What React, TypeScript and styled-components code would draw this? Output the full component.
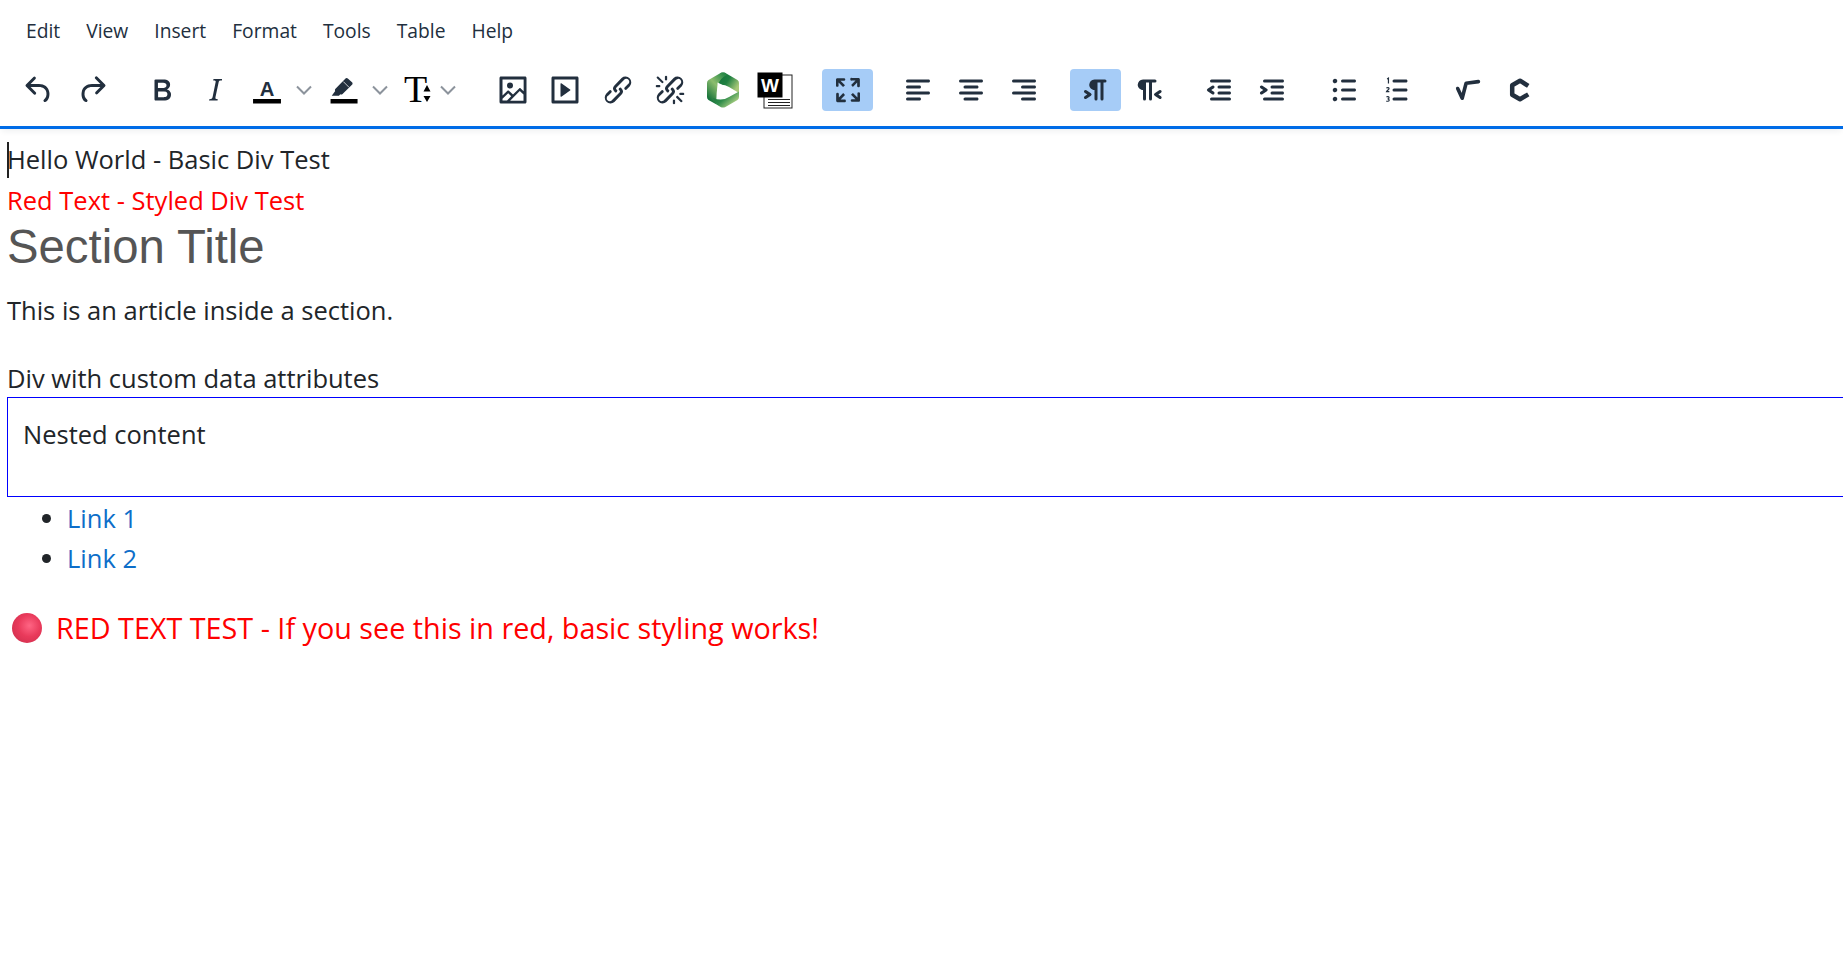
import styled, { createGlobalStyle } from "styled-components";

const GlobalStyle = createGlobalStyle`
  html, body {
    margin: 0;
    padding: 0;
    height: 100%;
    background: #fff;
    overflow: hidden;
  }
  #root { height: 100%; }
`;

const icons: Record<string, string> = {
  undo: "M6.4 8H12c3.7 0 6.2 2 6.8 5.1.6 2.7-.4 5.6-2.3 6.8a1 1 0 0 1-1-1.8c1.1-.6 1.8-2.7 1.4-4.6-.5-2.1-2.1-3.5-4.9-3.5H6.4l3.3 3.3a1 1 0 1 1-1.4 1.4l-5-5a1 1 0 0 1 0-1.4l5-5a1 1 0 0 1 1.4 1.4L6.4 8Z",
  redo: "M17.6 10H12c-2.8 0-4.4 1.4-4.9 3.5-.4 2 .3 4 1.4 4.6a1 1 0 1 1-1 1.8c-2-1.2-2.9-4.1-2.3-6.8.6-3 3-5.1 6.8-5.1h5.6l-3.3-3.3a1 1 0 1 1 1.4-1.4l5 5a1 1 0 0 1 0 1.4l-5 5a1 1 0 0 1-1.4-1.4l3.3-3.3Z",
  bold: "M7.8 19c-.3 0-.5 0-.6-.2l-.2-.5V5.7c0-.2 0-.4.2-.5l.6-.2h5c1.5 0 2.7.3 3.5 1 .7.6 1.1 1.4 1.1 2.5a3 3 0 0 1-.6 1.9c-.4.6-1 1-1.6 1.2.4.1.9.3 1.3.6s.8.7 1 1.2c.4.4.5 1 .5 1.6 0 1.3-.4 2.3-1.3 3-.8.7-2.1 1-3.8 1H7.8Zm5-8.3c.6 0 1.2-.1 1.6-.5.4-.3.6-.7.6-1.3 0-1.1-.8-1.7-2.3-1.7H9.3v3.5h3.4Zm.5 6c.7 0 1.3-.1 1.7-.4.4-.4.6-.9.6-1.5s-.2-1-.7-1.4c-.4-.3-1-.4-2-.4H9.4v3.8h4Z",
  italic: "M16.7 4.7l-.1.9h-.3c-.6 0-1 0-1.4.3-.3.3-.4.6-.5 1.1l-2.1 9.8v.6c0 .5.4.8 1.4.8h.2l-.2.8H8l.2-.8h.2c1.1 0 1.8-.5 2-1.5l2-9.8.1-.5c0-.6-.4-.8-1.4-.8h-.3l.2-.9h5.8Z",
  image: "M5 15.7l3.3-3.2c.3-.3.7-.3 1 0L12 15l4.1-4c.3-.4.8-.4 1 0l2 1.9V5H5v10.7ZM5 18V19h3l2.8-2.9-2-2L5 17.9Zm14-3l-2.5-2.4-6.4 6.5H19v-4ZM4 3h16c.6 0 1 .4 1 1v16c0 .6-.4 1-1 1H4a1 1 0 0 1-1-1V4c0-.6.4-1 1-1Zm6 8a2 2 0 1 0 0-4 2 2 0 0 0 0 4Z",
  media: "M4 3h16c.6 0 1 .4 1 1v16c0 .6-.4 1-1 1H4a1 1 0 0 1-1-1V4c0-.6.4-1 1-1Zm1 2v14h14V5H5Zm4.8 2.6l5.6 4a.5.5 0 0 1 0 .8l-5.6 4A.5.5 0 0 1 9 16V8a.5.5 0 0 1 .8-.4Z",
  link: "M6.2 12.3a1 1 0 0 1 1.4 1.4l-2 2a2 2 0 1 0 2.6 2.8l4.8-4.8a1 1 0 0 0 0-1.4 1 1 0 1 1 1.4-1.3 2.9 2.9 0 0 1 0 4L9.6 20a3.9 3.9 0 0 1-5.5-5.5l2-2Zm11.6-.6a1 1 0 0 1-1.4-1.4l2-2a2 2 0 1 0-2.6-2.8L11 10.3a1 1 0 0 0 0 1.4A1 1 0 1 1 9.6 13a2.9 2.9 0 0 1 0-4L14.4 4a3.9 3.9 0 0 1 5.5 5.5l-2 2Z",
  unlink: "M6.2 12.3a1 1 0 0 1 1.4 1.4l-2.1 2a2 2 0 1 0 2.7 2.8l4.8-4.8a1 1 0 0 0 0-1.4 1 1 0 1 1 1.4-1.3 2.9 2.9 0 0 1 0 4L9.6 20a3.9 3.9 0 0 1-5.5-5.5l2-2Zm11.6-.6a1 1 0 0 1-1.4-1.4l2.1-2a2 2 0 1 0-2.7-2.8L11 10.3a1 1 0 0 0 0 1.4A1 1 0 1 1 9.6 13a2.9 2.9 0 0 1 0-4L14.4 4a3.9 3.9 0 0 1 5.5 5.5l-2 2ZM7.6 6.3a.8.8 0 0 1-1 1.1L3.3 4.2a.7.7 0 1 1 1-1l3.2 3.1ZM5.1 8.6a.8.8 0 0 1 0 1.5H3a.8.8 0 0 1 0-1.5H5Zm5-3.5a.8.8 0 0 1-1.5 0V3a.8.8 0 0 1 1.5 0v2Zm6 11.8a.8.8 0 0 1 1-1l3.2 3.2a.8.8 0 0 1-1 1L16 17Zm-2.2 2a.8.8 0 0 1 1.5 0V21a.8.8 0 0 1-1.5 0V19Zm5-3.5a.7.7 0 0 1 0-1.5H21a.8.8 0 0 1 0 1.5H19Z",
  fullscreen: "m15.3 10-1.2-1.3 2.9-3h-2.3a.9.9 0 1 1 0-1.7H19c.5 0 .9.4.9.9v4.4a.9.9 0 1 1-1.8 0V7l-2.9 3Zm0 4 3 3v-2.3a.9.9 0 1 1 1.7 0V19c0 .5-.4.9-.9.9h-4.4a.9.9 0 1 1 0-1.8H17l-3-2.9 1.3-1.2ZM10 15.4l-2.9 3h2.3a.9.9 0 1 1 0 1.7H5a.9.9 0 0 1-.9-.9v-4.4a.9.9 0 1 1 1.8 0V17l2.9-3 1.2 1.3ZM8.7 10 5.7 7v2.3a.9.9 0 0 1-1.7 0V5c0-.5.4-.9.9-.9h4.4a.9.9 0 0 1 0 1.8H7l3 2.9-1.3 1.2Z",
  alignLeft: "M5 5h14c.6 0 1 .4 1 1s-.4 1-1 1H5a1 1 0 1 1 0-2Zm0 4h8c.6 0 1 .4 1 1s-.4 1-1 1H5a1 1 0 1 1 0-2Zm0 8h8c.6 0 1 .4 1 1s-.4 1-1 1H5a1 1 0 0 1 0-2Zm0-4h14c.6 0 1 .4 1 1s-.4 1-1 1H5a1 1 0 0 1 0-2Z",
  alignCenter: "M5 5h14c.6 0 1 .4 1 1s-.4 1-1 1H5a1 1 0 1 1 0-2Zm3 4h8c.6 0 1 .4 1 1s-.4 1-1 1H8a1 1 0 1 1 0-2Zm0 8h8c.6 0 1 .4 1 1s-.4 1-1 1H8a1 1 0 0 1 0-2Zm-3-4h14c.6 0 1 .4 1 1s-.4 1-1 1H5a1 1 0 0 1 0-2Z",
  alignRight: "M5 5h14c.6 0 1 .4 1 1s-.4 1-1 1H5a1 1 0 1 1 0-2Zm6 4h8c.6 0 1 .4 1 1s-.4 1-1 1h-8a1 1 0 0 1 0-2Zm0 8h8c.6 0 1 .4 1 1s-.4 1-1 1h-8a1 1 0 0 1 0-2Zm-6-4h14c.6 0 1 .4 1 1s-.4 1-1 1H5a1 1 0 0 1 0-2Z",
  ltr: "M11 5h7a1 1 0 0 1 0 2h-1v11a1 1 0 0 1-2 0V7h-2v11a1 1 0 0 1-2 0v-6c-.5 0-1 0-1.4-.3A3.4 3.4 0 0 1 7.8 10a3.3 3.3 0 0 1 0-2.8 3.4 3.4 0 0 1 1.8-1.8L11 5ZM4.4 16.2 6.2 15l-1.8-1.2a1 1 0 0 1 1.2-1.6l3 2a1 1 0 0 1 0 1.6l-3 2a1 1 0 1 1-1.2-1.6Z",
  rtl: "M8 5h8a1 1 0 0 1 0 2h-2v11a1 1 0 0 1-2 0V7h-2v11a1 1 0 0 1-2 0v-6c-.5 0-1 0-1.4-.3A3.4 3.4 0 0 1 4.8 10a3.3 3.3 0 0 1 0-2.8 3.4 3.4 0 0 1 1.8-1.8L8 5Zm12 11.2a1 1 0 1 1-1.2 1.6l-3-2a1 1 0 0 1 0-1.6l3-2a1 1 0 1 1 1.2 1.6L18.2 15l1.8 1.2Z",
  outdent: "M7 5h12c.6 0 1 .4 1 1s-.4 1-1 1H7a1 1 0 1 1 0-2Zm5 4h7c.6 0 1 .4 1 1s-.4 1-1 1h-7a1 1 0 0 1 0-2Zm0 4h7c.6 0 1 .4 1 1s-.4 1-1 1h-7a1 1 0 0 1 0-2Zm-5 4h12a1 1 0 0 1 0 2H7a1 1 0 0 1 0-2Zm1.6-3.8a1 1 0 0 1-1.2 1.6l-3-2a1 1 0 0 1 0-1.6l3-2a1 1 0 0 1 1.2 1.6L6.8 12l1.8 1.2Z",
  indent: "M7 5h12c.6 0 1 .4 1 1s-.4 1-1 1H7a1 1 0 1 1 0-2Zm5 4h7c.6 0 1 .4 1 1s-.4 1-1 1h-7a1 1 0 0 1 0-2Zm0 4h7c.6 0 1 .4 1 1s-.4 1-1 1h-7a1 1 0 0 1 0-2Zm-5 4h12a1 1 0 0 1 0 2H7a1 1 0 0 1 0-2Zm-2.6-3.8L6.2 12l-1.8-1.2a1 1 0 0 1 1.2-1.6l3 2a1 1 0 0 1 0 1.6l-3 2a1 1 0 1 1-1.2-1.6Z",
  bullist: "M11 5h8c.6 0 1 .4 1 1s-.4 1-1 1h-8a1 1 0 0 1 0-2Zm0 6h8c.6 0 1 .4 1 1s-.4 1-1 1h-8a1 1 0 0 1 0-2Zm0 6h8c.6 0 1 .4 1 1s-.4 1-1 1h-8a1 1 0 0 1 0-2ZM4.500 6c0-.4.1-.8.4-1 .3-.4.7-.5 1.100-.5.4 0 .8.1 1 .4.4.3.5.7.5 1.100 0 .4-.1.8-.4 1-.3.4-.7.5-1.100.5-.4 0-.8-.1-1-.4-.4-.3-.5-.7-.5-1.100Zm0 6c0-.4.1-.8.4-1 .3-.4.7-.5 1.100-.5.4 0 .8.1 1 .4.4.3.5.7.5 1.100 0 .4-.1.8-.4 1-.3.4-.7.5-1.100.5-.4 0-.8-.1-1-.4-.4-.3-.5-.7-.5-1.100Zm0 6c0-.4.1-.8.4-1 .3-.4.7-.5 1.100-.5.4 0 .8.1 1 .4.4.3.5.7.5 1.100 0 .4-.1.8-.4 1-.3.4-.7.5-1.100.5-.4 0-.8-.1-1-.4-.4-.3-.5-.7-.5-1.100Z",
  numlistLines: "M10 17h8c.6 0 1 .4 1 1s-.4 1-1 1h-8a1 1 0 0 1 0-2Zm0-6h8c.6 0 1 .4 1 1s-.4 1-1 1h-8a1 1 0 0 1 0-2Zm0-6h8c.6 0 1 .4 1 1s-.4 1-1 1h-8a1 1 0 1 1 0-2Z",
};

const toolbarGroups = [
  { items: ["undo", "redo"], extra: 0, gap: 2 },
  { items: ["bold", "italic", "color", "highlight", "fontsize"], extra: 0, gap: 2 },
  { items: ["image", "media", "link", "unlink", "panopto", "word"], extra: 0, gap: 1.5 },
  { items: ["fullscreen"], extra: 2.5, gap: 2 },
  { items: ["alignLeft", "alignCenter", "alignRight"], extra: 0, gap: 2 },
  { items: ["ltr", "rtl"], extra: 2, gap: 2 },
  { items: ["outdent", "indent"], extra: 0, gap: 2 },
  { items: ["bullist", "numlist"], extra: 2, gap: 2 },
  { items: ["sqrt", "cite"], extra: 0, gap: 2 },
];

const activeButtons = ["fullscreen", "ltr"];
const splitButtons = ["color", "highlight", "fontsize"];
const menuItems = ["Edit", "View", "Insert", "Format", "Tools", "Table", "Help"];

function PanoptoLogo() {
  return (
    <svg width="36" height="36" viewBox="0 0 36 36">
      <defs>
        <linearGradient id="panoTop" x1="0" y1="0" x2="1" y2="0.6">
          <stop offset="0" stopColor="#0f6f38" />
          <stop offset="0.55" stopColor="#1f8042" />
          <stop offset="1" stopColor="#a8c878" />
        </linearGradient>
        <linearGradient id="panoLeft" x1="0.9" y1="0.1" x2="0.3" y2="1">
          <stop offset="0" stopColor="#2a8a48" />
          <stop offset="0.45" stopColor="#8dbd6e" />
          <stop offset="1" stopColor="#0f6f38" />
        </linearGradient>
        <linearGradient id="panoBottom" x1="0" y1="0" x2="1" y2="0.7">
          <stop offset="0" stopColor="#0f6f38" />
          <stop offset="0.5" stopColor="#2f8c4a" />
          <stop offset="1" stopColor="#c8df90" />
        </linearGradient>
      </defs>
      <path d="M16 .8 Q18 0 20 .8 L32.500 8 Q34 9 34 11 V21 L24 15 Q19 12 13 13 L11 6 Z" fill="url(#panoTop)" />
      <path d="M16 .8 L3.500 8 Q2 9 2 11 V25 Q2 27 3.500 28 L11.500 32.500 Q11 20 13 13 Q15 6 22 3 L20 .8 Q18 0 16 .8 Z" fill="url(#panoLeft)" />
      <path d="M11.500 32.500 L16 35.200 Q18 36 20 35.200 L32.500 28 Q34 27 34 25 V19.500 L24 25 Q17 29.500 8 26 Z" fill="url(#panoBottom)" />
      <path d="M12.500 10.500 L28 18 L12.500 26.500 Z" fill="#fff" />
    </svg>
  );
}

function WordLogo() {
  return (
    <svg width="36" height="37" viewBox="0 0 36 37">
      <rect x="7" y="3" width="28" height="33" fill="#fff" stroke="#222" strokeWidth="1" />
      <rect x="0.5" y="0.5" width="25" height="25" fill="#000" />
      <text x="13" y="20" textAnchor="middle" fontFamily="'Liberation Sans', sans-serif" fontWeight="700" fontSize="19" fill="#fff">W</text>
      <path d="M11 27.500h22M11 30.500h22M11 33.500h22" stroke="#222" strokeWidth="1" />
    </svg>
  );
}

function ToolIcon({ name }: { name: string }) {
  if (name === "panopto") return <PanoptoLogo />;
  if (name === "word") return <WordLogo />;
  if (name === "color") {
    return (
      <svg width="36" height="36" viewBox="0 0 24 24">
        <text x="12" y="16" textAnchor="middle" fontFamily="'Liberation Sans', sans-serif" fontWeight="700" fontSize="13.500" fill="#222f3e">A</text>
        <rect x="2.700" y="18" width="18.600" height="3" fill="#000" />
      </svg>
    );
  }
  if (name === "highlight") {
    return (
      <svg width="36" height="36" viewBox="0 0 24 24">
        <path d="M15.200 4.400 18 6.800c.5.5.5 1.200 0 1.700l-6.300 6.200c-.4.4-1 .5-1.500.2l-.9.9H4.500l2.300-3.200c-.3-.5-.2-1.100.2-1.500l6.500-6.600c.5-.6 1.200-.7 1.700-.1Z" fill="#222f3e" />
        <path d="M12.200 6.400 16 10.200" stroke="#fff" strokeWidth=".5" />
        <rect x="3.700" y="18" width="18" height="3" fill="#000" />
      </svg>
    );
  }
  if (name === "fontsize") {
    return (
      <svg width="36" height="36" viewBox="0 0 36 36" overflow="visible">
        <text x="14.500" y="30" textAnchor="middle" fontFamily="'Liberation Serif', serif" fontSize="38" fill="#000">T</text>
        <path d="M22.500 19.500 L26 13 L29.500 19.500 Z M22.500 24 L29.500 24 L26 30 Z" fill="#000" />
      </svg>
    );
  }
  if (name === "numlist") {
    return (
      <svg width="36" height="36" viewBox="0 0 24 24">
        <path d={icons.numlistLines} fill="#222f3e" />
        <path d="M5.400 4.600 6.300 4v3.600M5 10.900c.3-.6 1.600-.6 1.700.1.100.6-1.500 1.500-1.700 2.100h1.900M5 16.700c.4-.4 1.700-.4 1.700.4 0 .6-.7.8-1 .8.500 0 1.100.3 1.100.9 0 .8-1.400.9-1.900.4" fill="none" stroke="#222f3e" strokeWidth=".8" />
      </svg>
    );
  }
  if (name === "sqrt") {
    return (
      <svg width="36" height="36" viewBox="0 0 24 24">
        <path d="M5.800 11 8.800 17.500 11.400 7.500 19.600 6.400" fill="none" stroke="#222f3e" strokeWidth="2.400" strokeLinecap="round" strokeLinejoin="round" />
      </svg>
    );
  }
  if (name === "cite") {
    return (
      <svg width="36" height="36" viewBox="0 0 24 24">
        <path d="M17.500 9.300 12 5.800 6.800 8.800v6.400L12 18.200l5.500-3.300" fill="none" stroke="#222f3e" strokeWidth="3" strokeLinejoin="round" />
      </svg>
    );
  }
  return (
    <svg width="36" height="36" viewBox="0 0 24 24">
      <path d={icons[name]} fill="#222f3e" fillRule="evenodd" />
    </svg>
  );
}

function Chevron() {
  return (
    <svg width="16" height="10" viewBox="0 0 16 10">
      <path d="M1 1.500 8 8.500 15 1.500" fill="none" stroke="#8c939c" strokeWidth="2" />
    </svg>
  );
}

export default function App() {
  return (
    <Page>
      <GlobalStyle />
      <Header>
        <MenuBar>
          {menuItems.map(item => <MenuItem key={item}>{item}</MenuItem>)}
        </MenuBar>
        <ToolBar>
          {toolbarGroups.map((group, index) => (
            <ToolGroup key={index} $extra={group.extra} $gap={group.gap}>
              {group.items.map(name => splitButtons.includes(name)
                ? <SplitButton key={name} $gap={name === "fontsize" ? 3 : 11}><ToolIcon name={name} /><Chevron /></SplitButton>
                : <ToolButton key={name} $active={activeButtons.includes(name)}><ToolIcon name={name} /></ToolButton>)}
            </ToolGroup>
          ))}
        </ToolBar>
      </Header>
      <Content>
        <Line><Caret />Hello World - Basic Div Test</Line>
        <RedLine>Red Text - Styled Div Test</RedLine>
        <SectionTitle>Section Title</SectionTitle>
        <Paragraph>This is an article inside a section.</Paragraph>
        <Line>Div with custom data attributes</Line>
        <BorderBox>Nested content</BorderBox>
        <LinkList>
          <li><a>Link 1</a></li>
          <li><a>Link 2</a></li>
        </LinkList>
        <RedNotice><RedBall />RED TEXT TEST - If you see this in red, basic styling works!</RedNotice>
      </Content>
    </Page>
  );
}

const Page = styled.div`
  height: 100%;
  display: flex;
  flex-direction: column;
  font-family: "Open Sans", "Noto Sans", sans-serif;
  overflow: hidden;
`;

const Header = styled.header`
  flex: none;
  border-bottom: 3px solid #006ce7;
  box-shadow: 0 4px 6px -2px rgba(34, 47, 62, 0.08);
  height: 126px;
`;

const MenuBar = styled.nav`
  display: flex;
  gap: 26px;
  height: 60px;
  padding-left: 26px;
  align-items: center;
`;

const MenuItem = styled.span`
  font-size: 19.25px;
  color: #222f3e;
`;

const ToolBar = styled.div`
  display: flex;
  align-items: center;
  gap: 19px;
  height: 42px;
  margin-top: 9px;
  padding-left: 13px;
`;

const ToolGroup = styled.div<{ $extra: number; $gap: number }>`
  display: flex;
  gap: ${({ $gap }) => $gap}px;
  align-items: center;
  margin-left: ${({ $extra }) => $extra}px;
`;

const ToolButton = styled.div<{ $active?: boolean }>`
  width: 51px;
  height: 42px;
  border-radius: 4px;
  display: flex;
  align-items: center;
  justify-content: center;
  background: ${({ $active }) => ($active ? "#a6ccf7" : "transparent")};
`;

const SplitButton = styled.div<{ $gap: number }>`
  width: 74px;
  height: 42px;
  display: flex;
  align-items: center;
  padding-left: 7px;
  box-sizing: border-box;
  gap: ${({ $gap }) => $gap}px;
  flex: none;
`;

const Content = styled.main`
  flex: 1;
  padding: 10px 0 0 7px;
  color: #212529;
  font-size: 25.5px;
  line-height: 40px;
`;

const Line = styled.div`
  position: relative;
`;

const Caret = styled.span`
  position: absolute;
  left: 0;
  top: 3px;
  width: 2px;
  height: 36px;
  background: #222;
`;

const RedLine = styled.div`
  color: #f00;
  margin-top: 1px;
`;

const SectionTitle = styled.h2`
  margin: 1px 0 0;
  font-family: "Liberation Sans", Arial, sans-serif;
  font-weight: 400;
  font-size: 47.3px;
  line-height: 52px;
  color: #555;
`;

const Paragraph = styled.p`
  margin: 17px 0 28px;
`;

const BorderBox = styled.div`
  border: 1px solid #00f;
  margin-right: -30px;
  height: 100px;
  box-sizing: border-box;
  padding: 16px 15px;
  margin-top: -1px;
`;

const LinkList = styled.ul`
  margin: 0;
  padding: 1px 0 0 60px;
  a { color: #0d6ec9; }
`;

const RedNotice = styled.p`
  margin: 30px 0 0;
  color: #f00;
  font-size: 28.75px;
  display: flex;
  align-items: center;
  gap: 14px;
  padding-left: 5px;
`;

const RedBall = styled.span`
  flex: none;
  width: 30px;
  height: 30px;
  border-radius: 50%;
  background: radial-gradient(circle at 58% 42%, #ff6584 0%, #e93a5b 45%, #c92b49 100%);
`;
